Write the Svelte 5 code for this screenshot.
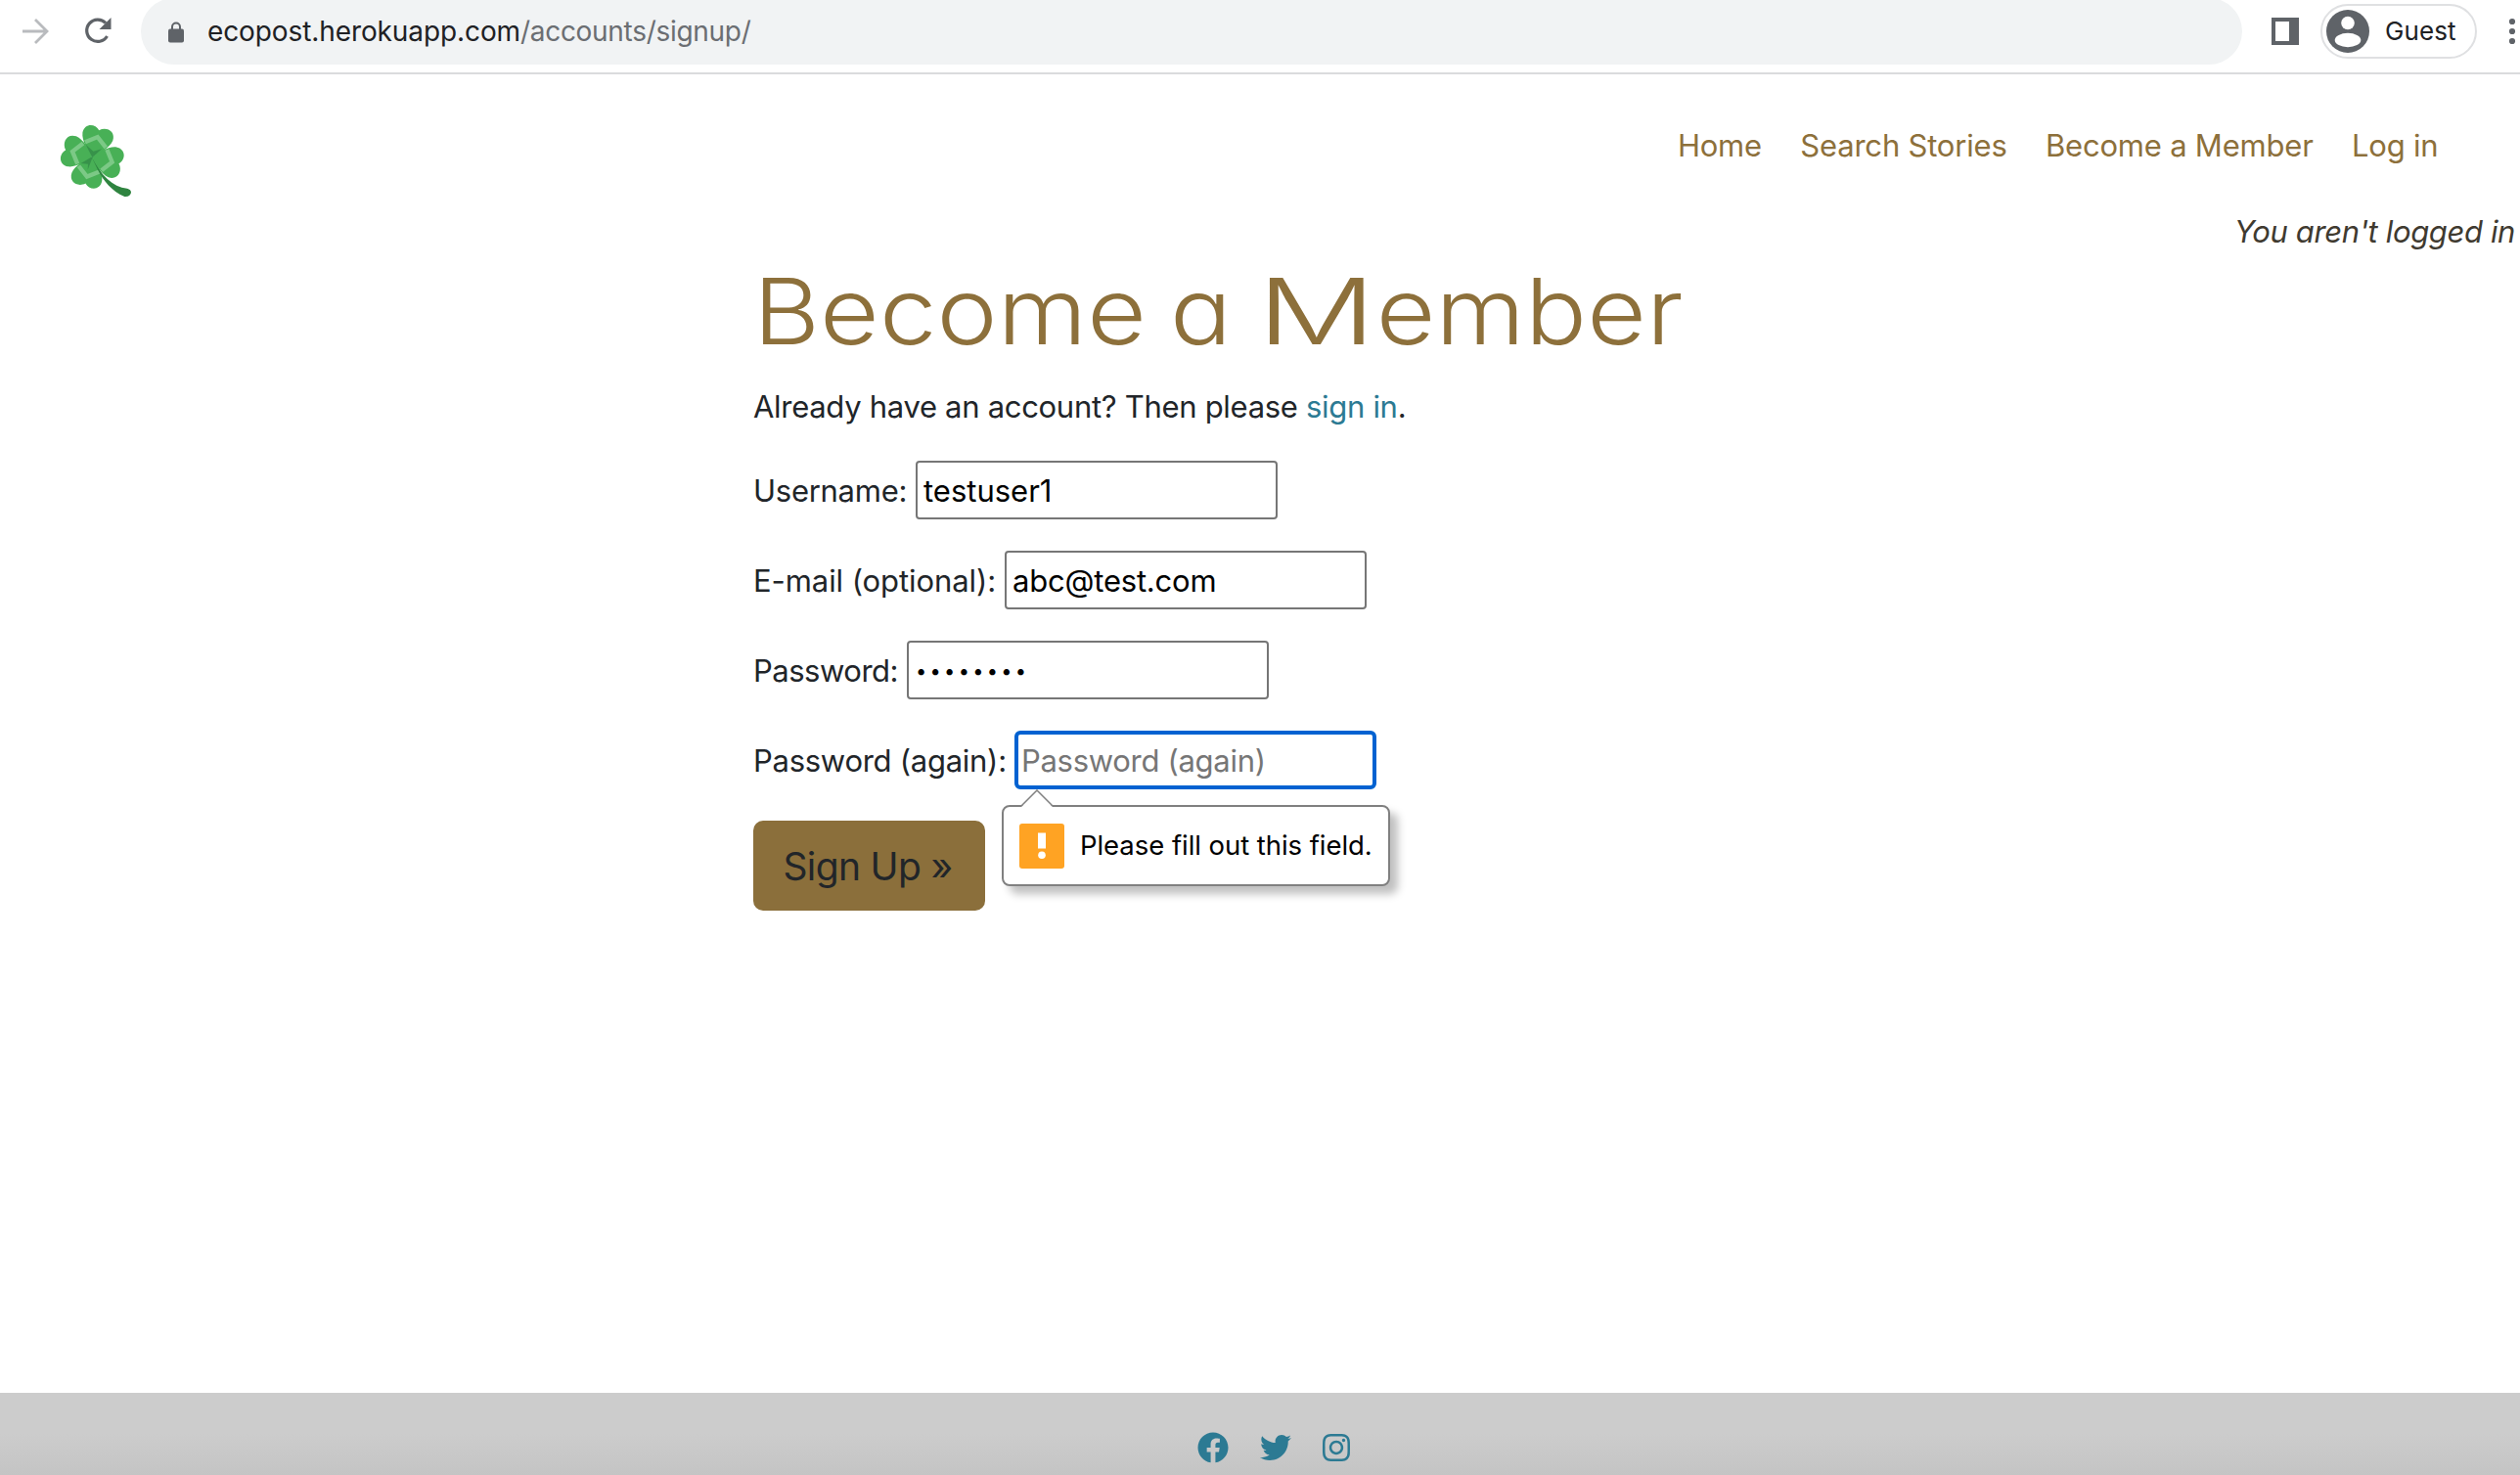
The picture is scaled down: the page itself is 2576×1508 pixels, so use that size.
<script>
  const fields = [
    { id: 'username', label: 'Username:', width: 166, type: 'text', value: 'testuser1' },
    { id: 'email', label: 'E-mail (optional):', width: 257, type: 'text', value: 'abc@test.com' },
    { id: 'password1', label: 'Password:', width: 157, type: 'password', value: 'testpass' },
    { id: 'password2', label: 'Password (again):', width: 267, type: 'password', value: '', placeholder: 'Password (again)', active: true }
  ];
</script>

<div class="page">
  <div class="toolbar">
    <svg class="forward" viewBox="0 0 28 28"><path d="M1 14H25M14 2L26 14L14 26" /></svg>
    <svg class="reload" viewBox="0 0 28 28"><path d="M23.5 19A11.2 11.2 0 1 1 22 5.5" /><path class="tip" d="M27.5 0V12H15.5Z" /></svg>
    <div class="address">
      <svg class="lock" viewBox="0 0 16 22"><path d="M4 9V5.5a4 4 0 0 1 8 0V9" /><rect y="7.5" width="16" height="14" rx="2" /></svg>
      <span class="url"><b>ecopost.herokuapp.com</b><span>/accounts/signup/</span></span>
    </div>
    <svg class="panel" viewBox="0 0 28 28"><path fill-rule="evenodd" d="M0 0H28V28H0ZM4 4V24H18V4Z" /></svg>
    <div class="profile">
      <svg viewBox="0 0 44 44"><circle cx="22" cy="22" r="22" /><circle class="face" cx="22" cy="13.5" r="6.8" /><ellipse class="face" cx="22" cy="31" rx="13.3" ry="7.2" /></svg>
      <span>Guest</span>
    </div>
    <svg class="more" viewBox="0 0 8 28"><circle cx="4" cy="4" r="3.1" /><circle cx="4" cy="14" r="3.1" /><circle cx="4" cy="24" r="3.1" /></svg>
  </div>

  <header>
    <svg class="logo" viewBox="0 0 360 330">
      {#each [15, 105, 195, 285] as angle}
        <g transform="translate(163 148) rotate({angle})">
          <path class="leaf" d="M0 0C-16-12-45-40-48-64C-50-94-18-102-1-84C18-102 50-94 48-64C45-40 16-12 0 0Z" />
          <path class="vein" d="M-33-38L0-63L33-38" />
        </g>
      {/each}
      <path class="shade" d="M163 150L143 110L166 131L192 124Z" />
      <path class="shade" d="M165 146L128 168L150 170L149 188Z" />
      <path class="stem" d="M160 146C190 205 225 240 270 245Q282 248 282 258Q278 272 262 270C222 252 198 222 180 188Z" />
    </svg>
    <nav>
      <a href="#home">Home</a>
      <a href="#search">Search Stories</a>
      <a href="#join">Become a Member</a>
      <a href="#login">Log in</a>
    </nav>
  </header>
  <p class="status">You aren't logged in</p>

  <main>
    <h1>Become a <span>M</span>ember</h1>
    <p class="intro">Already have an account? Then please <a href="#signin">sign in</a>.</p>
    <form>
      {#each fields as f}
        <div class="row">
          <label for={f.id} class={f.id} style:width="{f.width}px">{f.label}</label>
          <input id={f.id} class={f.id} class:active={f.active} type={f.type} value={f.value} placeholder={f.placeholder} />
          {#if f.active}
            <div class="hint">
              <svg class="pointer" viewBox="0 0 34 18"><path class="fill" d="M1 18L17 1L33 18Z" /><path class="line" d="M1 17L17 1L33 17" /></svg>
              <svg class="warn" viewBox="0 0 46 46"><rect width="46" height="46" rx="3" /><rect class="mark" x="19" y="9.5" width="8" height="16" /><circle class="mark" cx="23" cy="32.2" r="3.8" /></svg>
              <span>Please fill out this field.</span>
            </div>
          {/if}
        </div>
      {/each}
      <button type="button">Sign Up »</button>
    </form>
  </main>

  <footer>
    <svg viewBox="0 0 512 512"><path d="M504 256C504 119 393 8 256 8S8 119 8 256c0 123.8 90.7 226.400 209.300 245V327.700h-63V256h63v-54.600c0-62.200 37-96.500 93.700-96.500 27.100 0 55.500 4.800 55.500 4.800v61h-31.300c-30.800 0-40.400 19.100-40.400 38.700V256h68.800l-11 71.700h-57.800V501C413.300 482.400 504 379.800 504 256z" /></svg>
    <svg viewBox="0 0 512 512"><path d="M459.370 151.716c.325 4.548.325 9.097.325 13.645 0 138.720-105.583 298.558-298.558 298.558-59.452 0-114.680-17.219-161.137-47.106 8.447.974 16.568 1.299 25.340 1.299 49.055 0 94.213-16.568 130.274-44.832-46.132-.975-84.792-31.188-98.112-72.772 6.498.974 12.995 1.624 19.818 1.624 9.421 0 18.843-1.300 27.614-3.573-48.081-9.747-84.143-51.980-84.143-102.985v-1.299c13.969 7.797 30.214 12.670 47.431 13.319-28.264-18.843-46.781-51.005-46.781-87.391 0-19.492 5.197-37.360 14.294-52.954 51.655 63.675 129.300 105.258 216.365 109.807-1.624-7.797-2.599-15.918-2.599-24.040 0-57.828 46.782-104.934 104.934-104.934 30.213 0 57.502 12.670 76.670 33.137 23.715-4.548 46.456-13.320 66.599-25.340-7.798 24.366-24.366 44.833-46.132 57.827 21.117-2.273 41.584-8.122 60.426-16.243-14.292 20.791-32.161 39.308-52.628 54.253z" /></svg>
    <svg viewBox="0 0 448 512"><path d="M224.100 141c-63.600 0-114.900 51.300-114.900 114.900s51.300 114.900 114.900 114.900S339 319.500 339 255.900 287.700 141 224.100 141zm0 189.600c-41.100 0-74.700-33.500-74.700-74.700s33.500-74.700 74.700-74.700 74.700 33.500 74.700 74.700-33.600 74.700-74.700 74.700zm146.400-194.300c0 14.900-12 26.800-26.800 26.800-14.900 0-26.800-12-26.800-26.800s12-26.800 26.800-26.800 26.800 12 26.800 26.800zm76.100 27.200c-1.700-35.900-9.900-67.700-36.200-93.900-26.200-26.200-58-34.400-93.900-36.200-37-2.100-147.900-2.100-184.900 0-35.800 1.700-67.600 9.900-93.900 36.100s-34.400 58-36.200 93.900c-2.100 37-2.100 147.900 0 184.900 1.700 35.900 9.900 67.700 36.200 93.900s58 34.400 93.900 36.200c37 2.100 147.900 2.100 184.900 0 35.900-1.700 67.700-9.900 93.900-36.200 26.200-26.200 34.400-58 36.200-93.900 2.100-37 2.100-147.800 0-184.800zM398.800 388c-7.800 19.600-22.900 34.700-42.600 42.600-29.500 11.700-99.500 9-132.100 9s-102.700 2.600-132.100-9c-19.600-7.800-34.700-22.900-42.600-42.600-11.700-29.500-9-99.500-9-132.100s-2.600-102.700 9-132.100c7.800-19.600 22.900-34.700 42.600-42.600 29.500-11.700 99.500-9 132.100-9s102.700-2.600 132.100 9c19.600 7.800 34.700 22.900 42.600 42.600 11.700 29.500 9 99.500 9 132.100s2.700 102.700-9 132.100z" /></svg>
  </footer>
</div>

<style>
  :global(body) { background: #fff; }
  .page { box-sizing: border-box; height: 1508px; display: flex; flex-direction: column; overflow: hidden; font: 31px/48px Inter, "Liberation Sans", sans-serif; color: #212529; white-space: nowrap; }
  a { color: #2c7a93; text-decoration: none; }
  p, h1 { margin: 0; }
  svg { display: block; flex: none; }

  .toolbar { flex: none; box-sizing: border-box; height: 76px; border-bottom: 2px solid #dadbdd; display: flex; align-items: flex-start; padding-left: 22px; }
  .forward { width: 28px; height: 28px; margin-top: 18px; fill: none; stroke: #b9bbbe; stroke-width: 2.8; }
  .reload { width: 28px; height: 28px; margin: 18px 0 0 36px; fill: none; stroke: #5f6368; stroke-width: 3.2; }
  .reload .tip { fill: #5f6368; stroke: none; }
  .address { width: 2148px; height: 68px; margin: -2px 0 0 30px; box-sizing: border-box; border-radius: 34px; background: #f1f3f4; display: flex; align-items: center; padding-left: 28px; }
  .lock { width: 16px; height: 22px; margin-top: 1px; fill: #5f6368; }
  .lock path { fill: none; stroke: #5f6368; stroke-width: 2; }
  .url { margin-left: 24px; font-size: 28px; color: #6b6e72; display: flex; letter-spacing: -.3px; }
  .url b { font-weight: 400; color: #202124; letter-spacing: -.1px; }
  .panel { width: 28px; height: 28px; margin: 18px 0 0 30px; fill: #5f6368; }
  .profile { box-sizing: border-box; width: 160px; height: 56px; margin: 4px 0 0 22px; border: 2px solid #dfe0e2; border-radius: 28px; display: flex; align-items: center; padding-left: 4px; font-size: 26px; letter-spacing: .1px; color: #202124; }
  .profile svg { width: 44px; height: 44px; fill: #5f6368; margin-right: 16px; }
  .profile .face { fill: #fff; }
  .more { width: 8px; height: 28px; margin: 18px 0 0 32px; fill: #5f6368; }

  header { flex: none; height: 137px; display: flex; justify-content: space-between; align-items: flex-start; padding: 0 83.5px 0 40px; box-sizing: border-box; }
  .logo { width: 120px; height: 110px; margin-top: 35px; }
  .leaf { fill: #48b056; }
  .vein { fill: none; stroke: #7cc986; stroke-width: 13; }
  .shade { fill: #37924a; }
  .stem { fill: #2f8440; }
  nav { display: flex; gap: 39.4px; margin-top: 49px; letter-spacing: -.2px; }
  nav a { color: #8d703b; }
  .status { display: flex; justify-content: flex-end; padding-right: 5px; font-style: italic; letter-spacing: -.37px; color: #3f3a30; }

  main { padding-left: 770px; }
  h1 { width: max-content; font-size: 93.5px; font-weight: 300; line-height: 114px; color: #8d703b; font-feature-settings: "cv11"; word-spacing: -5px; letter-spacing: .1px; transform: scaleX(1.12); transform-origin: left; }
  h1 span { display: inline-block; transform: scaleX(1.29); margin: 0 12px 0 14px; }
  .intro { margin-top: 17px; letter-spacing: -.3px; }
  form { margin-top: 31px; display: flex; flex-direction: column; align-items: flex-start; gap: 32px; }
  .row { position: relative; display: flex; align-items: center; height: 60px; }
  label { display: block; padding-top: 2px; letter-spacing: -.27px; }
  label.email { letter-spacing: -.08px; }
  label.password1 { letter-spacing: -.49px; }
  input { box-sizing: border-box; width: 370px; height: 60px; border: 2px solid #767676; border-radius: 4px; padding: 0 6px; background: #fff; color: #000; font: inherit; outline: none; }
  input.email { letter-spacing: -.2px; }
  input.password1 { font-size: 20px; letter-spacing: 3.3px; padding: 2px 6px 0 7px; }
  input.active { border: 4px solid #0062d1; border-radius: 6px; padding: 0 3px; letter-spacing: -.3px; }
  input::placeholder { color: #767676; }
  .hint { position: absolute; left: 254px; top: 76px; box-sizing: border-box; width: 397px; height: 83px; border: 2px solid #808080; border-radius: 8px; background: #fff; box-shadow: 8px 8px 8px rgba(0, 0, 0, .25); display: flex; align-items: center; padding-left: 16px; font-size: 27.5px; letter-spacing: -.05px; color: #000; }
  .hint span { padding-bottom: 2px; }
  .hint .pointer { position: absolute; left: 17px; top: -18px; width: 34px; height: 18px; }
  .pointer .fill { fill: #fff; }
  .pointer .line { fill: none; stroke: #808080; stroke-width: 1.5; }
  .warn { width: 46px; height: 46px; margin-right: 16px; fill: #ffa323; }
  .warn .mark { fill: #fff; }
  button { width: 237px; height: 92px; border: 0; border-radius: 10px; padding: 2px 3px 0 0; background: #8b6f3b; color: #212529; font: 39px/48px Inter, "Liberation Sans", sans-serif; letter-spacing: -.67px; }

  footer { flex: none; height: 84px; margin-top: auto; background: linear-gradient(#ccc 50%, #c4c4c4); display: flex; justify-content: center; gap: 30px; padding: 40px 0 0 30px; box-sizing: border-box; }
  footer svg { width: 32px; height: 32px; fill: #2c7a93; }
  footer svg:first-child { margin-right: 2px; }
</style>
